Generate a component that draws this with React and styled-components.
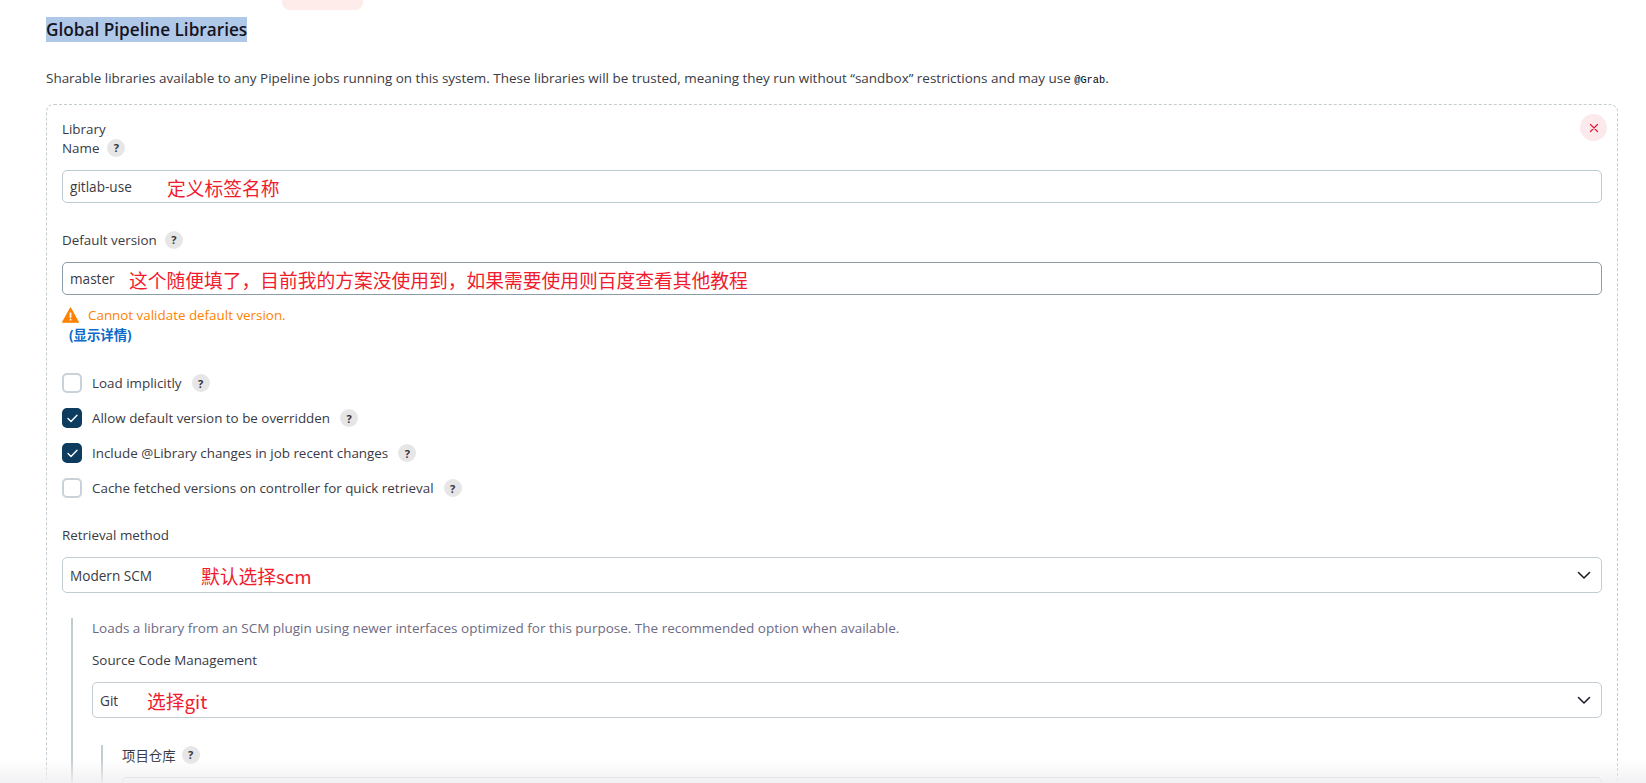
import React from "react";
import styled, { createGlobalStyle } from "styled-components";

const GlobalStyle = createGlobalStyle`
  html, body {
    margin: 0;
    height: 100%;
    background: #fff;
    overflow: hidden;
  }
  body {
    font-family: "Open Sans", "Noto Sans CJK SC", sans-serif;
    font-size: 13.4px;
    color: #3a3a44;
  }
`;

const HelpButton = ({ $gap }) => <Help $gap={$gap}>?</Help>;

const ChevronIcon = () => (
  <Chevron viewBox="0 0 16 16" fill="none">
    <path d="M2.5 5.5 8 11l5.5-5.5" stroke="#20202c" strokeWidth="1.6" strokeLinecap="round" strokeLinejoin="round" />
  </Chevron>
);

const WarningIcon = () => (
  <svg width="17" height="16" viewBox="0 0 17 16">
    <path d="M8.5 1 16.4 15.2H.6z" fill="#fe8200" stroke="#fe8200" strokeWidth="1.2" strokeLinejoin="round" />
    <rect x="7.6" y="5.4" width="1.8" height="5.4" rx=".6" fill="#fff" />
    <rect x="7.6" y="11.8" width="1.8" height="1.8" rx=".6" fill="#fff" />
  </svg>
);

const CheckRow = ({ checked, children }) => (
  <Row>
    <Box $checked={checked}>
      {checked && (
        <svg width="11" height="9" viewBox="0 0 11 9" fill="none">
          <path d="M1 4.6 4 7.6 10 1.2" stroke="#fff" strokeWidth="1.4" strokeLinecap="round" strokeLinejoin="round" />
        </svg>
      )}
    </Box>
    <RowLabel>{children}</RowLabel>
    <HelpButton $gap="10px" />
  </Row>
);

const App = () => (
  <Page>
    <GlobalStyle />
    <TopTab />
    <Heading>Global Pipeline Libraries</Heading>
    <Description>
      Sharable libraries available to any Pipeline jobs running on this system. These libraries will be trusted,
      meaning they run without “sandbox” restrictions and may use <Code>@Grab</Code>.
    </Description>
    <Card>
      <CloseButton>
        <svg width="10" height="10" viewBox="0 0 10 10" fill="none">
          <path d="M1.5 1.5l7 7M8.5 1.5l-7 7" stroke="#e6173c" strokeWidth="1.2" strokeLinecap="round" />
        </svg>
      </CloseButton>
      <LibraryTitle>Library</LibraryTitle>
      <Label>
        Name <HelpButton $gap="4px" />
      </Label>
      <TextField>
        gitlab-use
        <Note $left="104px">定义标签名称</Note>
      </TextField>

      <Label $top="27px">
        Default version <HelpButton $gap="4px" />
      </Label>
      <TextField $dark>
        master
        <Note $left="66px">这个随便填了，目前我的方案没使用到，如果需要使用则百度查看其他教程</Note>
      </TextField>

      <Warning>
        <WarningIcon />
        <span>Cannot validate default version.</span>
      </Warning>
      <DetailsLink>(显示详情)</DetailsLink>

      <Checks>
        <CheckRow>Load implicitly</CheckRow>
        <CheckRow checked>Allow default version to be overridden</CheckRow>
        <CheckRow checked>Include @Library changes in job recent changes</CheckRow>
        <CheckRow>Cache fetched versions on controller for quick retrieval</CheckRow>
      </Checks>

      <Label $top="27px">Retrieval method</Label>
      <SelectField>
        Modern SCM
        <Note $left="138px">默认选择scm</Note>
        <ChevronIcon />
      </SelectField>

      <Nested $top="25px">
        <Hint>Loads a library from an SCM plugin using newer interfaces optimized for this purpose. The recommended option when available.</Hint>
        <Label $top="12px">Source Code Management</Label>
        <SelectField>
          Git
          <Note $left="54px">选择git</Note>
          <ChevronIcon />
        </SelectField>
        <Nested $top="27px">
          <Label>
            项目仓库 <HelpButton $gap="2px" />
          </Label>
          <TextField />
        </Nested>
      </Nested>
    </Card>
    <BottomFade />
  </Page>
);

export default App;

const Page = styled.div`
  position: relative;
  height: 783px;
  padding: 17px 28px 0 46px;
  box-sizing: border-box;
  overflow: hidden;
`;

const TopTab = styled.div`
  position: absolute;
  top: 0;
  left: 282px;
  width: 81px;
  height: 10px;
  background: #fdecea;
  border-radius: 0 0 8px 8px;
`;

const Heading = styled.h1`
  display: inline-block;
  margin: 0;
  height: 25px;
  line-height: 25px;
  font-size: 17.2px;
  font-weight: 600;
  color: #14141f;
  background: #b0c8e8;
`;

const Description = styled.p`
  margin: 26px 0 0;
  line-height: 20px;
  font-size: 13.46px;
`;

const Code = styled.code`
  font-family: "Liberation Mono", monospace;
  font-size: 10.3px;
  color: #000;
`;

const Card = styled.div`
  position: relative;
  margin-top: 14px;
  padding: 15px 15px 0 15px;
  height: 800px;
  box-sizing: border-box;
  border: 1px dashed #c3ccd1;
  border-radius: 8px;
`;

const CloseButton = styled.div`
  position: absolute;
  top: 9px;
  right: 10px;
  width: 27px;
  height: 27px;
  display: flex;
  align-items: center;
  justify-content: center;
  border-radius: 50%;
  background: #fbe9eb;
`;

const LibraryTitle = styled.div`
  line-height: 18px;
`;

const Label = styled.div`
  display: flex;
  align-items: center;
  gap: 4px;
  height: 19px;
  margin-top: ${(props) => props.$top || "0"};
`;

const Help = styled.span`
  flex: none;
  margin-left: ${(props) => props.$gap || "0"};
  width: 18px;
  height: 18px;
  display: inline-flex;
  align-items: center;
  justify-content: center;
  border-radius: 50%;
  background: #e6e6e6;
  font-size: 11px;
  font-weight: 700;
  color: #33333d;
`;

const TextField = styled.div`
  position: relative;
  margin-top: 13px;
  height: 33px;
  padding-left: 7px;
  display: flex;
  align-items: center;
  box-sizing: border-box;
  border: 1px solid ${(props) => (props.$dark ? "#8b9ca8" : "#bccbd1")};
  border-radius: 5px;
  font-size: 13.6px;
`;

const SelectField = styled(TextField)`
  height: 36px;
  border-color: #c3ccd1;
`;

const Note = styled.span`
  position: absolute;
  left: ${(props) => props.$left};
  top: 50%;
  transform: translateY(-50%);
  font-family: "Noto Sans CJK SC", sans-serif;
  font-size: 18.75px;
  color: #f01c2e;
  white-space: nowrap;
`;

const Chevron = styled.svg`
  position: absolute;
  right: 9px;
  top: 9px;
  width: 16px;
  height: 16px;
`;

const Warning = styled.div`
  margin-top: 10px;
  display: flex;
  align-items: center;
  gap: 9px;
  height: 19px;
  color: #fe8200;
`;

const DetailsLink = styled.div`
  margin: 1px 0 0 7px;
  line-height: 20px;
  font-weight: 700;
  color: #0b6aca;
`;

const Checks = styled.div`
  margin-top: 28px;
  display: flex;
  flex-direction: column;
  gap: 15px;
`;

const Row = styled.div`
  display: flex;
  align-items: center;
  height: 20px;
`;

const Box = styled.span`
  flex: none;
  width: 20px;
  height: 20px;
  margin-right: 10px;
  display: flex;
  align-items: center;
  justify-content: center;
  box-sizing: border-box;
  border-radius: 5px;
  border: 2px solid ${(props) => (props.$checked ? "#0d3c5e" : "#c9d2d8")};
  background: ${(props) => (props.$checked ? "#0d3c5e" : "#fff")};
`;

const RowLabel = styled.span`
  white-space: nowrap;
`;

const Nested = styled.div`
  margin: ${(props) => props.$top || "0"} 0 0 9px;
  padding-left: 19px;
  border-left: 2px solid #c3ccd1;
`;

const Hint = styled.div`
  line-height: 20px;
  font-size: 13.5px;
  color: #6d6b84;
`;

const BottomFade = styled.div`
  position: absolute;
  left: 0;
  right: 0;
  bottom: 0;
  height: 24px;
  background: linear-gradient(to bottom, rgba(240, 240, 242, 0), rgba(240, 240, 242, 0.9));
`;
